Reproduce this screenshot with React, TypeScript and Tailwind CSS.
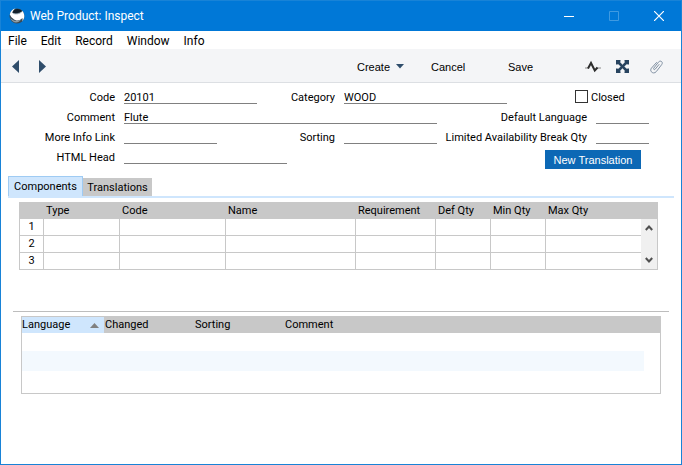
import { useState } from "react";

const menuItems = ["File", "Edit", "Record", "Window", "Info"];

const componentColumns = [
    { title: "", width: "w-6" },
    { title: "Type", width: "w-[76px]" },
    { title: "Code", width: "w-[106px]" },
    { title: "Name", width: "" },
    { title: "Requirement", width: "w-20" },
    { title: "Def Qty", width: "w-[55px]" },
    { title: "Min Qty", width: "w-[55px]" },
    { title: "Max Qty", width: "w-[95px]" },
];

const tabs = [
    { name: "Components", width: "w-[75px]" },
    { name: "Translations", width: "w-[69px]" },
];

const Globe = () => (
    <svg width="16" height="16" viewBox="0 0 16 16" aria-hidden="true">
        <circle cx="8" cy="8" r="7.5" fill="#3a4b56" />
        <path d="M.8 6.500C1.500 3 4 1 6.500.6 4.500 2 3.200 3.500 3.500 5c3 1.800 7.500 1 10-2 2.500 3.500 2.500 7.500-.5 10.500 1-2 .5-3 .3-3.500-2 3-6.500 3.500-9.300.5C2.500 9.500 1.500 8 .8 6.500z" fill="#fff" />
        <path d="M3.500 4.500C4.500 2 7 .8 9.500 1.200c1.500.2 2.700.8 3.500 1.800-3 2-6 2.700-9.500 1.500z" fill="#12202a" />
        <path d="M4.500 5.600c2.500.8 5.500.4 8-1.400" fill="none" stroke="#9db0bb" strokeWidth=".8" />
        <path d="M1 9.500c2.500 3.500 7 4.500 11 2-2.500 4-8.500 4.500-11-2z" fill="#8b9ca7" />
    </svg>
);

const Field = ({ id, label, labelWidth = "", width, value = "" }: {
    id: string; label: string; labelWidth?: string; width: string; value?: string;
}) => {
    const [text, setText] = useState(value);
    return (
        <div className="flex gap-[9px]">
            <label htmlFor={id} className={`text-right whitespace-nowrap ${labelWidth}`}>{label}</label>
            <input
                id={id}
                type="text"
                value={text}
                onChange={(e) => setText(e.target.value)}
                className={`h-[14px] border-b border-[#808080] pt-[2px] outline-none ${width}`}
            />
        </div>
    );
};

const App = () => {
    const [closed, setClosed] = useState(false);
    const [tab, setTab] = useState("Components");

    return (
        <div className="flex min-h-screen flex-col border border-t-0 border-[#1883d7] bg-white font-[Roboto,sans-serif] text-[11px] leading-4 text-black">
            <header className="flex h-[31px] items-center border-t border-[#1883d7] bg-[#0078d7] pr-[17px] pl-2 text-white">
                <Globe />
                <h1 className="ml-[5px] text-xs">Web Product: Inspect</h1>
                <div className="ml-auto flex items-center gap-[35px]">
                    <button aria-label="Minimize">
                        <svg width="10" height="10" className="block"><path d="M0 5.500h10" stroke="#fff" /></svg>
                    </button>
                    <button aria-label="Maximize">
                        <svg width="10" height="10" className="block"><path d="M.5.5h9v9h-9z" fill="none" stroke="#3f9ae1" /></svg>
                    </button>
                    <button aria-label="Close">
                        <svg width="10" height="10" className="block"><path d="M0 0l10 10M10 0L0 10" stroke="#fff" strokeWidth="1.200" /></svg>
                    </button>
                </div>
            </header>

            <nav className="flex h-[18px] items-center gap-[14px] pt-[2px] pl-[7px] text-xs leading-4">
                {menuItems.map(item => <button key={item}>{item}</button>)}
            </nav>

            <div className="flex h-[34px] items-center border-b border-[#dcdfe3] bg-[#f4f5f7] pt-[2px] pr-[18px] pl-[11px] font-['Liberation_Sans',sans-serif]">
                <button aria-label="Previous">
                    <svg width="7" height="13" className="block"><path d="M7 0v13L0 6.500z" fill="#2f4d6b" /></svg>
                </button>
                <button aria-label="Next" className="ml-5">
                    <svg width="7" height="13" className="block"><path d="M0 0v13l7-6.500z" fill="#2f4d6b" /></svg>
                </button>
                <div className="ml-auto flex items-center">
                    <button className="flex w-[74px] items-center gap-[6px]">
                        Create
                        <svg width="8" height="5"><path d="M0 0h8L4 4.500z" fill="#2f4d6b" /></svg>
                    </button>
                    <button className="w-[77px] text-left">Cancel</button>
                    <button className="w-[77px] text-left">Save</button>
                    <button aria-label="Activities">
                        <svg width="16" height="14" viewBox="0 0 16 14" className="block" fill="none">
                            <path d="M0 8h4M12 8h4" stroke="#8a8a8a" />
                            <path d="M3 8.500L6 3l3.800 7.500L12.500 7.500" stroke="#2e2e2e" strokeWidth="2" />
                        </svg>
                    </button>
                    <button aria-label="Expand" className="ml-[15px]">
                        <svg width="13" height="13" viewBox="0 0 13 13" className="block" fill="#27435f">
                            <path d="M0 0h4.500v1.500L4 2l2.500 2.700L9 2l-.5-.5V0H13v4.500h-1.500L11 4 8.300 6.500 11 9l.5-.5H13V13H8.500v-1.500L9 11 6.500 8.300 4 11l.5.5V13H0V8.500h1.500L2 9l2.700-2.500L2 4l-.5.500H0z" />
                        </svg>
                    </button>
                    <button aria-label="Attachments" className="ml-[21px]">
                        <svg width="13" height="14" viewBox="0 0 13 14" className="block" fill="none" stroke="#8191a3" strokeLinecap="round">
                            <path d="M9 4.500L5.200 9.200c-.8 1-2.200 0-1.400-1.100l4.600-5.900c2-2.500 5.200-.2 3.300 2.400l-5.400 7c-2.600 3.200-7.300 0-4.900-3.400L6.500 2.500" />
                        </svg>
                    </button>
                </div>
            </div>

            <form className="pt-px pr-8">
                <div className="flex h-5 pt-[6px]">
                    <Field id="code" label="Code" labelWidth="w-[114px]" width="w-[133px]" value="20101" />
                    <Field id="category" label="Category" labelWidth="w-[78px]" width="w-[163px]" value="WOOD" />
                    <div className="ml-auto flex w-[74px] gap-[3px]">
                        <input
                            id="closed"
                            type="checkbox"
                            checked={closed}
                            onChange={() => setClosed(!closed)}
                            className="h-[13px] w-[13px] appearance-none border border-[#333] bg-white checked:bg-[#333]"
                        />
                        <label htmlFor="closed">Closed</label>
                    </div>
                </div>
                <div className="flex h-5 justify-between pt-[6px]">
                    <Field id="comment" label="Comment" labelWidth="w-[114px]" width="w-[313px]" value="Flute" />
                    <Field id="language" label="Default Language" width="w-[53px]" />
                </div>
                <div className="flex h-5 pt-[6px]">
                    <Field id="link" label="More Info Link" labelWidth="w-[114px]" width="w-[93px]" />
                    <Field id="sorting" label="Sorting" labelWidth="w-[118px]" width="w-[93px]" />
                    <div className="ml-auto">
                        <Field id="breakQty" label="Limited Availability Break Qty" width="w-[53px]" />
                    </div>
                </div>
                <div className="flex justify-between pt-[6px] pr-2">
                    <Field id="head" label="HTML Head" labelWidth="w-[114px]" width="w-[163px]" />
                    <button type="button" className="h-[19px] w-24 bg-[#0c68b5] font-['Liberation_Sans',sans-serif] text-white">
                        New Translation
                    </button>
                </div>
            </form>

            <div role="tablist" className="mt-[7px] mr-[7px] ml-[7px] flex items-end border-b-2 border-[#cfe6fd]">
                {tabs.map(({ name, width }) => (
                    <button
                        key={name}
                        role="tab"
                        aria-selected={tab === name}
                        onClick={() => setTab(name)}
                        className={`pt-px whitespace-nowrap ${width} ${tab === name
                            ? "h-5 border border-b-0 border-[#9fcbf3] bg-[#cfe6fd]"
                            : "h-[18px] bg-[#c8c8c8]"}`}
                    >
                        {name}
                    </button>
                ))}
            </div>

            <div className="mt-1 mr-[23px] ml-[18px] flex border border-b-0 border-[#c8c8c8]">
                <table className="flex-1 table-fixed border-separate border-spacing-0">
                    <thead>
                        <tr className="h-4 bg-[#c8c8c8] text-left">
                            {componentColumns.map(col => (
                                <th key={col.title} className={`p-0 pl-[2px] font-normal whitespace-nowrap ${col.width}`}>{col.title}</th>
                            ))}
                        </tr>
                    </thead>
                    <tbody>
                        {[1, 2, 3].map(row => (
                            <tr key={row} className="h-[17px]">
                                {componentColumns.map((col, i) => (
                                    <td
                                        key={col.title}
                                        className="border-r border-b border-[#c8c8c8] p-0 text-center last:border-r-0"
                                    >
                                        {i === 0 ? row : ""}
                                    </td>
                                ))}
                            </tr>
                        ))}
                    </tbody>
                </table>
                <div className="flex w-4 flex-col items-center justify-between border-t-16 border-b border-[#c8c8c8] bg-[#f0f0f0] py-[6px]">
                    <button aria-label="Scroll up">
                        <svg width="8" height="6" className="block"><path d="M.8 5L4 1.500 7.200 5" fill="none" stroke="#505050" strokeWidth="2" /></svg>
                    </button>
                    <button aria-label="Scroll down">
                        <svg width="8" height="6" className="block"><path d="M.8 1L4 4.500 7.200 1" fill="none" stroke="#505050" strokeWidth="2" /></svg>
                    </button>
                </div>
            </div>

            <hr className="mt-[41px] mr-3 ml-3 border-[#bdbdbd]" />

            <div className="mt-1 mr-5 mb-[70px] ml-5 border border-[#c8c8c8]">
                <table className="w-full table-fixed border-separate border-spacing-0">
                    <thead>
                        <tr className="h-4 bg-[#c8c8c8] text-left">
                            <th className="w-[82px] bg-[#cfe6fd] p-0 font-normal">
                                <button className="flex w-full items-center justify-between pr-[5px]">
                                    Language
                                    <svg width="9" height="5"><path d="M0 5h9L4.500 0z" fill="#808080" /></svg>
                                </button>
                            </th>
                            <th className="w-[91px] p-0 pl-px font-normal">Changed</th>
                            <th className="w-[90px] p-0 font-normal">Sorting</th>
                            <th className="p-0 font-normal">Comment</th>
                            <th className="w-4 p-0" />
                        </tr>
                    </thead>
                    <tbody>
                        <tr className="h-[18px]"><td colSpan={5} /></tr>
                        <tr className="h-5"><td colSpan={4} className="bg-[#f3f9fe]" /><td /></tr>
                        <tr className="h-[22px]"><td colSpan={5} /></tr>
                    </tbody>
                </table>
            </div>
        </div>
    );
};

export default App;
